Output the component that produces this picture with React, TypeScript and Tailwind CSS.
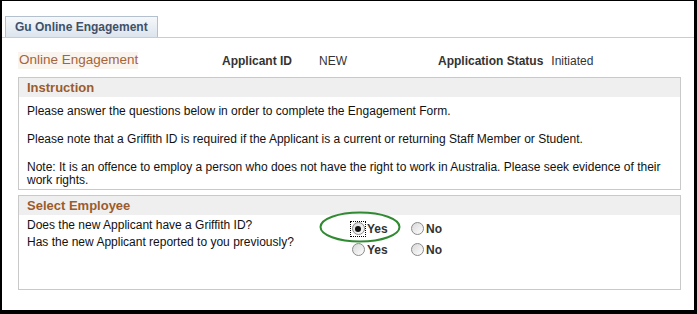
import React from 'react'

const questions = [
  { text: 'Does the new Applicant have a Griffith ID?', value: 'yes', focused: true },
  { text: 'Has the new Applicant reported to you previously?', value: '', focused: false },
]

function Radio({ checked, focused }: { checked?: boolean; focused?: boolean }) {
  return (
    <span
      className={`flex h-[16px] w-[16px] items-center justify-center border ${
        focused ? 'border-dotted border-black' : 'border-transparent'
      }`}
    >
      <span className="flex h-[13px] w-[13px] items-center justify-center rounded-full border border-[#8a8a8a] bg-gradient-to-br from-[#d8d8d8] to-white">
        {checked && <span className="h-[6px] w-[6px] rounded-full bg-[#111]" />}
      </span>
    </span>
  )
}

function PanelHeader({ title }: { title: string }) {
  return (
    <div className="flex h-[19px] items-center bg-[#efefef] px-[8px] text-[13px] font-bold text-[#9c5b2b]">
      {title}
    </div>
  )
}

export default function App() {
  return (
    <div className="h-[314px] w-[697px] bg-black pb-[4px] pl-[2px] pr-[3px] pt-[1px] font-['Liberation_Sans',Arial,sans-serif]">
      <div className="h-full w-full bg-white pt-[15px]">
        {/* Tab strip */}
        <div className="flex items-end border-b border-[#c3ced9] pl-[3px] pr-[1px]">
          <div className="flex h-[21px] w-[153px] items-center border-l border-r border-t border-[#b3c0ce] bg-gradient-to-b from-[#f6f8fa] to-[#dce4ed] pl-[9px] text-[12px] font-bold text-[#3f5168]">
            Gu Online Engagement
          </div>
        </div>

        {/* Page title row */}
        <div className="mt-[14px] flex h-[17px] items-center pl-[16px] text-[12px]">
          <span className="flex h-[17px] w-[120px] items-center whitespace-nowrap bg-[#faf4ee] pl-[1px] text-[13.5px] text-[#a5643a]">
            Online Engagement
          </span>
          <span className="ml-[84px] font-bold text-[#333]">Applicant ID</span>
          <span className="ml-[27px] text-[#333]">NEW</span>
          <span className="ml-[91px] font-bold text-[#333]">Application Status</span>
          <span className="ml-[8px] text-[#333]">Initiated</span>
        </div>

        {/* Instruction */}
        <div className="ml-[16px] mt-[8px] w-[663px] border border-[#c9c9c9]">
          <PanelHeader title="Instruction" />
          <div className="px-[8px] pb-[2px] pt-[8px] text-[12px] leading-[13px] text-[#111]">
            <p>Please answer the questions below in order to complete the Engagement Form.</p>
            <p className="mt-[15px]">
              Please note that a Griffith ID is required if the Applicant is a current or returning Staff Member or Student.
            </p>
            <p className="mt-[15px]">
              Note: It is an offence to employ a person who does not have the right to work in Australia. Please seek evidence of their work rights.
            </p>
          </div>
        </div>

        {/* Select Employee */}
        <div className="ml-[16px] mt-[5px] h-[95px] w-[663px] border border-[#c9c9c9]">
          <PanelHeader title="Select Employee" />
          <div className="relative flex">
            <div className="w-[331px] px-[8px] pt-[3px] text-[12px] leading-[14px] text-[#111]">
              {questions.map((q, i) => (
                <div key={i} className={i === 0 ? '' : 'mt-[3px]'}>
                  {q.text}
                </div>
              ))}
            </div>
            <div className="pt-[3px] text-[12px] font-bold text-[#333]">
              {questions.map((q, i) => (
                <div key={i} className="flex h-[21px] items-center">
                  <Radio checked={q.value === 'yes'} focused={q.focused} />
                  <span className="ml-[1px] w-[21px]">Yes</span>
                  <span className="ml-[21px]">
                    <Radio checked={q.value === 'no'} />
                  </span>
                  <span className="ml-[1px]">No</span>
                </div>
              ))}
            </div>

            {/* green annotation circle */}
            <svg className="absolute left-[299px] top-[-5px]" width="84" height="34" viewBox="0 0 84 34">
              <ellipse cx="42" cy="17" rx="39.5" ry="14.5" fill="none" stroke="#2f8a32" strokeWidth="2" />
            </svg>
          </div>
        </div>
      </div>
    </div>
  )
}
